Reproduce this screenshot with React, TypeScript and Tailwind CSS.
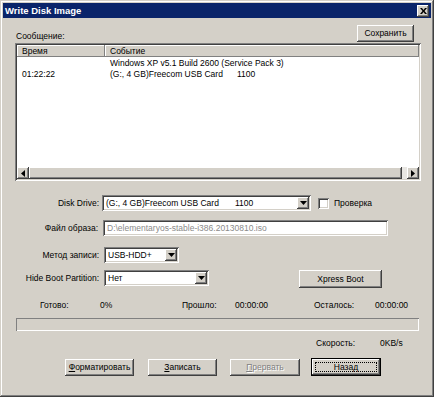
import React from 'react'

const raised = "shadow-[inset_-1px_-1px_#404040,inset_1px_1px_#ffffff,inset_-2px_-2px_#808080,inset_2px_2px_#d4d0c8]"
const sunken = "shadow-[inset_1px_1px_#808080,inset_-1px_-1px_#ffffff,inset_2px_2px_#404040,inset_-2px_-2px_#d4d0c8]"

const Arrow = () => (
    <svg width="7" height="4" viewBox="0 0 7 4">
        <path d="M0 0h7L3.5 4z" fill="#000" />
    </svg>
)

const Combo = ({ w, children }: { w: string; children: React.ReactNode }) => (
    <div className={`flex h-[16px] ${w} bg-white p-[2px] ${sunken}`}>
        <div className="flex-1 flex items-center pl-[2px] whitespace-nowrap overflow-hidden">{children}</div>
        <div className={`w-[12px] bg-[#d4d0c8] flex items-center justify-center ${raised}`}>
            <Arrow />
        </div>
    </div>
)

const Btn = ({ w, children, off }: { w: string; children: React.ReactNode; off?: boolean }) => (
    <div className={`${w} h-[17px] bg-[#d4d0c8] flex items-center justify-center ${raised} ${off ? "text-[#808080] [text-shadow:1px_1px_#ffffff]" : ""}`}>
        {children}
    </div>
)

export default function App() {
    return (
        <div className="w-[434px] h-[397px] bg-[#d4d0c8] text-black text-[8.5px] leading-none font-['Liberation_Sans',Arial,sans-serif] flex flex-col shadow-[inset_-1px_-1px_#404040,inset_1px_1px_#d4d0c8,inset_-2px_-2px_#808080,inset_2px_2px_#ffffff]">
            {/* Title */}
            <div className="mx-[3px] mt-[3px] h-[15px] bg-[#0a246a] flex items-center justify-between pl-[2px] pr-[2px]">
                <span className="text-white font-bold text-[9.5px]">Write Disk Image</span>
                <div className={`w-[12px] h-[12px] bg-[#d4d0c8] flex items-center justify-center ${raised}`}>
                    <svg width="7" height="6" viewBox="0 0 7 6">
                        <path d="M0 0h2l1.5 2L5 0h2L4.5 3 7 6H5L3.5 4 2 6H0l2.5-3z" fill="#000" />
                    </svg>
                </div>
            </div>

            {/* Message header */}
            <div className="mt-[7px] ml-[15px] w-[406px] h-[17px] flex items-end justify-between">
                <span className="pl-[1px] pb-[2px]">Сообщение:</span>
                <div className="mr-[7px]">
                    <Btn w="w-[57px]">Сохранить</Btn>
                </div>
            </div>

            {/* Log list */}
            <div className={`mt-[1px] ml-[15px] w-[406px] h-[138px] bg-white p-[2px] flex flex-col ${sunken}`}>
                <div className="h-[12px] flex bg-[#d4d0c8]">
                    <div className="w-[88px] pl-[5px] flex items-center shadow-[inset_-1px_-1px_#808080,inset_1px_1px_#ffffff]">Время</div>
                    <div className="flex-1 pl-[5px] flex items-center shadow-[inset_-1px_-1px_#808080,inset_1px_1px_#ffffff]">Событие</div>
                </div>
                <div className="flex-1 pt-[1px]">
                    <div className="h-[11px] flex items-center">
                        <span className="w-[93px] pl-[5px]"></span>
                        <span>Windows XP v5.1 Build 2600 (Service Pack 3)</span>
                    </div>
                    <div className="h-[11px] flex items-center">
                        <span className="w-[93px] pl-[5px]">01:22:22</span>
                        <span className="w-[127px]">(G:, 4 GB)Freecom USB Card</span>
                        <span>1100</span>
                    </div>
                </div>
                <div className="h-[12px] flex bg-[#e8e6e2]">
                    <div className={`w-[12px] bg-[#d4d0c8] flex items-center justify-center ${raised}`}>
                        <svg width="4" height="7" viewBox="0 0 4 7"><path d="M4 0v7L0 3.5z" fill="#000" /></svg>
                    </div>
                    <div className={`flex-1 bg-[#d4d0c8] ${raised}`}></div>
                    <div className="w-[5px]"></div>
                    <div className={`w-[12px] bg-[#d4d0c8] flex items-center justify-center ${raised}`}>
                        <svg width="4" height="7" viewBox="0 0 4 7"><path d="M0 0v7L4 3.5z" fill="#000" /></svg>
                    </div>
                </div>
            </div>

            {/* Disk drive */}
            <div className="mt-[14px] h-[16px] flex items-center">
                <span className="w-[99px] text-right">Disk Drive:</span>
                <div className="ml-[3px]">
                    <Combo w="w-[209px]">
                        <span className="w-[129px]">(G:, 4 GB)Freecom USB Card</span>
                        <span>1100</span>
                    </Combo>
                </div>
                <div className={`ml-[7px] w-[11px] h-[11px] bg-white ${sunken}`}></div>
                <span className="ml-[5px]">Проверка</span>
            </div>

            {/* Image file */}
            <div className="mt-[9px] h-[16px] flex items-center">
                <span className="w-[98px] text-right">Файл образа:</span>
                <div className={`ml-[5px] w-[285px] h-[16px] bg-white flex items-center pl-[4px] text-[#8a8a8a] ${sunken}`}>
                    D:\elementaryos-stable-i386.20130810.iso
                </div>
            </div>

            {/* Write method */}
            <div className="mt-[11px] h-[16px] flex items-center">
                <span className="w-[99px] text-right">Метод записи:</span>
                <div className="ml-[5px]">
                    <Combo w="w-[75px]">USB-HDD+</Combo>
                </div>
            </div>

            {/* Hide boot partition */}
            <div className="mt-[7px] h-[18px] flex items-start">
                <span className="w-[99px] h-[16px] flex items-center justify-end">Hide Boot Partition:</span>
                <div className="ml-[5px]">
                    <Combo w="w-[105px]">Нет</Combo>
                </div>
                <div className="ml-[90px]">
                    <div className={`w-[83px] h-[18px] bg-[#d4d0c8] flex items-center justify-center ${raised}`}>Xpress Boot</div>
                </div>
            </div>

            {/* Stats */}
            <div className="mt-[11px] h-[12px] flex items-center">
                <span className="ml-[40px] w-[60px]">Готово:</span>
                <span className="w-[82px]">0%</span>
                <span className="w-[53px]">Прошло:</span>
                <span className="w-[79px]">00:00:00</span>
                <span className="w-[61px]">Осталось:</span>
                <span>00:00:00</span>
            </div>

            <div className="mt-[7px] ml-[16px] w-[403px] h-[13px] shadow-[inset_1px_1px_#808080,inset_-1px_-1px_#ffffff]"></div>

            <div className="mt-[6px] h-[12px] flex items-center">
                <span className="ml-[316px] w-[64px]">Скорость:</span>
                <span>0KB/s</span>
            </div>

            {/* Buttons */}
            <div className="mt-[9px] h-[18px] flex items-center">
                <div className="ml-[65px]">
                    <Btn w="w-[69px]"><span className="underline">Ф</span>орматировать</Btn>
                </div>
                <div className="ml-[14px]">
                    <Btn w="w-[69px]"><span className="underline">З</span>аписать</Btn>
                </div>
                <div className="ml-[13px]">
                    <Btn w="w-[70px]" off><span className="underline">П</span>рервать</Btn>
                </div>
                <div className="ml-[11px] w-[70px] h-[18px] border border-black">
                    <div className={`w-full h-full bg-[#d4d0c8] p-[3px] ${raised}`}>
                        <div className="w-full h-full border border-dotted border-black flex items-center justify-center">Назад</div>
                    </div>
                </div>
            </div>
        </div>
    )
}
